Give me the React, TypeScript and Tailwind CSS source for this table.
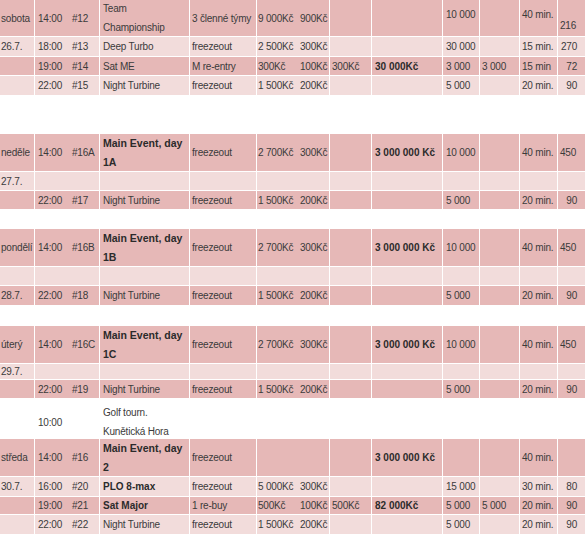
import React from 'react'

type Cell = string | { t: string; b?: boolean; v?: 'top' | 'bottom' | 'low'; left?: boolean }

type Row =
  | { gap: true; h: string }
  | { gap?: false; h: string; bg: 'dark' | 'light' | 'white'; cells: Cell[] }

// sloupce: den, čas, #, turnaj, typ, buy-in, fee, re-buy, garance, stack, add-on, levely, hráči
const COLS = [
  { w: 'w-[35px]', pad: 'pl-[1px]', border: true },
  { w: 'w-[34px]', pad: 'pl-[3px]', border: false },
  { w: 'w-[31px]', pad: 'pl-[3px]', border: true },
  { w: 'w-[90px]', pad: 'pl-[3px]', border: true },
  { w: 'w-[67px]', pad: 'pl-[2px]', border: true },
  { w: 'w-[40px]', pad: 'pl-[1px]', border: false },
  { w: 'w-[33px]', pad: 'pl-[3px]', border: true },
  { w: 'w-[42px]', pad: 'pl-[2px]', border: true },
  { w: 'w-[71px]', pad: 'pl-[3px]', border: true },
  { w: 'w-[37px]', pad: 'pl-[3px]', border: true },
  { w: 'w-[40px]', pad: 'pl-[2px]', border: true },
  { w: 'w-[38px]', pad: 'pl-[2px]', border: true },
  { w: 'w-[27px]', pad: 'pr-[8px] justify-end', border: false },
]

const BG = {
  dark: 'bg-[#e6b8b7]',
  light: 'bg-[#f2dcdb]',
  white: 'bg-white',
}

const empty = (day = ''): Cell[] => [day, '', '', '', '', '', '', '', '', '', '', '', '']

const nightTurbine = (day: string, time: string, no: string): Cell[] => [
  day, time, no, 'Night Turbine', 'freezeout', '1 500Kč', '200Kč', '', '', '5 000', '', '20 min.', '90',
]

const mainEvent = (day: string, no: string, part: string): Cell[] => [
  day, '14:00', no, { t: 'Main Event, day\n' + part, b: true }, 'freezeout', '2 700Kč', '300Kč', '',
  { t: '3 000 000 Kč', b: true }, '10 000', '', '40 min.', { t: '450', left: true },
]

const ROWS: Row[] = [
  {
    h: 'h-[37px]', bg: 'dark',
    cells: ['sobota', '14:00', '#12', 'Team\nChampionship', '3 členné týmy', '9 000Kč', '900Kč', '', '',
      { t: '10 000', v: 'top' }, '', { t: '40 min.', v: 'top' }, { t: '216', v: 'bottom', left: true }],
  },
  { h: 'h-[20px]', bg: 'light', cells: ['26.7.', '18:00', '#13', 'Deep Turbo', 'freezeout', '2 500Kč', '300Kč', '', '', '30 000', '', '15 min.', '270'] },
  { h: 'h-[19px]', bg: 'dark', cells: ['', '19:00', '#14', 'Sat ME', 'M re-entry', '300Kč', '100Kč', '300Kč', { t: '30 000Kč', b: true }, '3 000', '3 000', '15 min', '72'] },
  { h: 'h-[20px]', bg: 'light', cells: nightTurbine('', '22:00', '#15') },
  { gap: true, h: 'h-[38px]' },
  { h: 'h-[38px]', bg: 'dark', cells: mainEvent('neděle', '#16A', '1A') },
  { h: 'h-[19px]', bg: 'light', cells: empty('27.7.') },
  { h: 'h-[19px]', bg: 'dark', cells: nightTurbine('', '22:00', '#17') },
  { gap: true, h: 'h-[19px]' },
  { h: 'h-[38px]', bg: 'dark', cells: mainEvent('pondělí', '#16B', '1B') },
  { h: 'h-[19px]', bg: 'light', cells: empty() },
  { h: 'h-[20px]', bg: 'dark', cells: nightTurbine('28.7.', '22:00', '#18') },
  { gap: true, h: 'h-[20px]' },
  { h: 'h-[38px]', bg: 'dark', cells: mainEvent('úterý', '#16C', '1C') },
  { h: 'h-[16px]', bg: 'light', cells: empty('29.7.') },
  { h: 'h-[19px]', bg: 'dark', cells: nightTurbine('', '22:00', '#19') },
  {
    h: 'h-[40px]', bg: 'white',
    cells: ['', { t: '10:00', v: 'low' }, '', { t: 'Golf tourn.\nKunětická Hora', v: 'low' }, '', '', '', '', '', '', '', '', ''],
  },
  {
    h: 'h-[38px]', bg: 'dark',
    cells: ['středa', '14:00', '#16', { t: 'Main Event, day\n2', b: true }, 'freezeout', '', '', '',
      { t: '3 000 000 Kč', b: true }, '', '', '40 min.', ''],
  },
  { h: 'h-[20px]', bg: 'light', cells: ['30.7.', '16:00', '#20', { t: 'PLO 8-max', b: true }, 'freezeout', '5 000Kč', '300Kč', '', '', '15 000', '', '30 min.', '80'] },
  { h: 'h-[18px]', bg: 'dark', cells: ['', '19:00', '#21', { t: 'Sat Major', b: true }, '1 re-buy', '500Kč', '100Kč', '500Kč', { t: '82 000Kč', b: true }, '5 000', '5 000', '20 min.', '90'] },
  { h: 'h-[20px]', bg: 'light', cells: nightTurbine('', '22:00', '#22') },
]

function TableCell({ cell, col }: { cell: Cell; col: (typeof COLS)[number] }) {
  const c = typeof cell === 'string' ? { t: cell } : cell
  const lines = c.t.split('\n')
  const valign =
    c.v === 'top' ? 'items-start pt-[5px]'
    : c.v === 'bottom' ? 'items-end pb-[1px]'
    : c.v === 'low' ? 'items-center pt-[7px]'
    : 'items-center'
  const pad = c.left ? 'pl-[2px]' : col.pad
  const big = c.b && lines.length > 1
  return (
    <div className={`${col.w} shrink-0 h-full flex ${valign} ${pad} overflow-hidden whitespace-nowrap ${col.border ? 'border-r border-white' : ''}`}>
      <div
        className={
          c.b
            ? `font-bold text-[#2b2b2b] ${big ? 'text-[10.5px]' : 'text-[10px]'} leading-[19px]`
            : 'text-[#3b3b3b] text-[10px] tracking-[-0.2px] leading-[19px]'
        }
      >
        {lines.map((l, i) => (
          <div key={i}>{l}</div>
        ))}
      </div>
    </div>
  )
}

export default function App() {
  return (
    <div className="w-[585px] h-[536px] overflow-hidden bg-white" style={{ fontFamily: '"Liberation Sans", Arial, sans-serif' }}>
      {ROWS.map((row, i) =>
        row.gap ? (
          <div key={i} className={`${row.h} bg-white`} />
        ) : (
          <div key={i} className={`${row.h} ${BG[row.bg]} flex border-b border-white`}>
            {row.cells.map((cell, j) => (
              <TableCell key={j} cell={cell} col={COLS[j]} />
            ))}
          </div>
        ),
      )}
    </div>
  )
}
